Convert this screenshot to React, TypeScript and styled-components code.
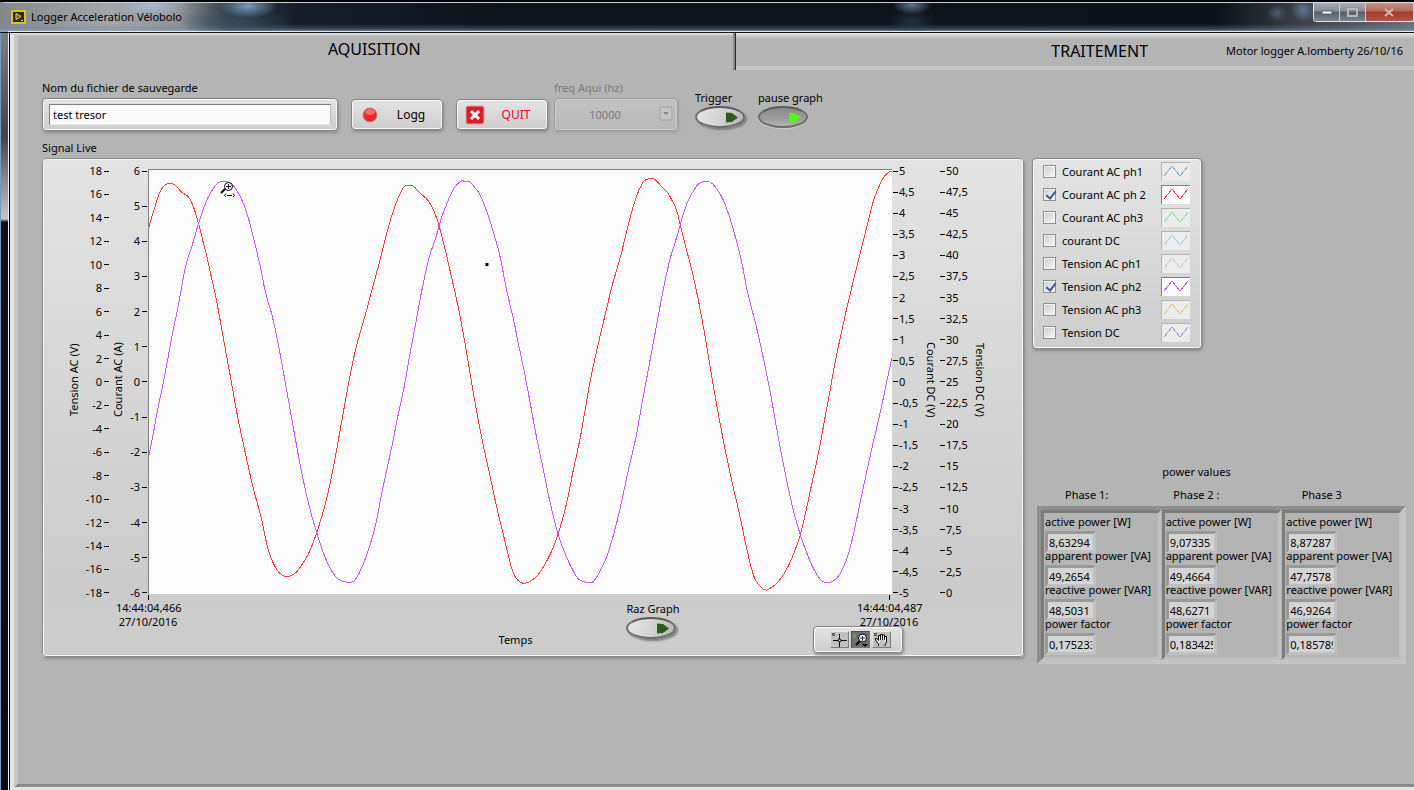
import React, { useState } from 'react';
import styled, { createGlobalStyle, css } from 'styled-components';

const GlobalStyle = createGlobalStyle`
  * { box-sizing: border-box; }
  body {
    margin: 0;
    background: #05080c;
    color: #000;
    font: 11px/16px "Noto Sans", "Open Sans", sans-serif;
  }
  button, input, select { font: inherit; color: inherit; margin: 0; }
`;

/* ---------- window frame ---------- */

const Window = styled.div`
  min-height: 100vh;
  display: flex;
  flex-direction: column;
  padding-left: 10px;
  background:
    linear-gradient(#e8eef2, #e8eef2) 8px 31px / 1px 100% no-repeat,
    linear-gradient(#000, #000) 9px 31px / 1px 100% no-repeat,
    linear-gradient(#6d9cc9, #6d9cc9) 0 0 / 1px 100% no-repeat,
    linear-gradient(#8b9095 0, #6b7177 60px, #3f4449 135px, #8f9295 185px, #c4c6c8 219px, #0b1216 222px, #070c12 100%);
`;

const TitleBar = styled.header`
  height: 33px;
  margin-left: -10px;
  display: flex;
  align-items: flex-start;
  background:
    linear-gradient(#10161d, #10161d) 0 32px / 100% 1px no-repeat,
    linear-gradient(#dfe9f2, #dfe9f2) 8px 31px / 100% 1px no-repeat,
    linear-gradient(#c9d0d6, #c9d0d6) 3px 2px / 100% 1px no-repeat,
    linear-gradient(#020304, #020304) 0 0 / 100% 2px no-repeat,
    radial-gradient(36px 12px at 152px 6px, #a9c3dccc, transparent),
    radial-gradient(30px 12px at 248px 6px, #8fb4d8cc, transparent),
    radial-gradient(60px 14px at 235px 22px, #3e5468aa, transparent),
    radial-gradient(20px 10px at 912px 5px, #6f8dabcc, transparent),
    radial-gradient(24px 12px at 912px 22px, #2c3f53aa, transparent),
    radial-gradient(10px 8px at 1277px 13px, #4c5d70, transparent),
    radial-gradient(12px 12px at 1303px 10px, #5d7492, transparent),
    linear-gradient(transparent 24px, #6c87a466 29px, #8fb0d0aa 31px),
    linear-gradient(90deg, #83888d 0, #a3a7ab 110px, #8d9297 180px, #2b3742 230px, #141d27 300px, #0d141c 500px, #0c131a 1220px, #3a4046 1300px, #6a7076 1414px);
`;

const TitleText = styled.h1`
  flex: 1;
  margin: 8px 0 0 5px;
  font-size: 11px;
  line-height: 18px;
  font-weight: 400;
`;

const AppIcon = styled.svg`
  margin: 10px 0 0 11px;
`;

const WindowButtons = styled.div`
  display: flex;
  height: 20px;
  margin-top: 2px;
  border: 1px solid #dfe4e8;
  border-right: 0;
  border-radius: 0 0 0 4px;
  overflow: hidden;
`;

const WindowButton = styled.button<{ $close?: boolean }>`
  width: ${(p) => (p.$close ? 48 : 26)}px;
  padding: 0;
  display: grid;
  place-items: center;
  border: 0;
  border-right: 1px solid #c9ced2;
  background: ${(p) =>
    p.$close
      ? 'linear-gradient(#c49186, #b4685a 45%, #a03a2a 50%, #b2574a)'
      : 'linear-gradient(#a9adb2, #868c93 45%, #565e67 50%, #7c848c)'};
`;

/* ---------- tabs ---------- */

const TabControl = styled.main`
  flex: 1;
  display: flex;
  flex-direction: column;
  background: #e3e3e3;
  padding: 0 0 3px 4px;
`;

const TabList = styled.div`
  display: grid;
  grid-template-columns: 16fr 15fr;
  height: 37px;
  margin-left: -4px;
`;

const Tab = styled.button<{ $active?: boolean }>`
  display: flex;
  align-items: center;
  padding: 0;
  border: 0;
  font-size: 16px;
  line-height: 20px;
  ${(p) =>
    p.$active
      ? css`
          justify-content: center;
          padding: 0 0 6px 6px;
          background:
            linear-gradient(#e3e3e3, #e3e3e3) 0 0 / 4px 100% no-repeat,
            linear-gradient(#c8c8c8, #c8c8c8) 4px 2px / 4px 100% no-repeat,
            linear-gradient(#dedede 0, #dedede 1px, #c8c8c8 2px, #b4b4b4 3px);
          border-right: 2px solid #8a8a8a;
        `
      : css`
          justify-content: flex-end;
          gap: 78px;
          padding: 0 11px 2px 0;
          border-left: 1px solid #2a2a2a;
          background: linear-gradient(#dedede 0 2px, #c8c8c8 2px 5px, #b4b4b4 5px 33px, #c8c8c8 33px);
        `}
`;

const TabNote = styled.span`
  font-size: 11px;
`;

const Pane = styled.section`
  flex: 1;
  padding: 9px 8px 24px 24px;
  background: #b4b4b4;
  border-left: 4px solid #c8c8c8;
  border-bottom: 3px solid #8a8a8a;
`;

/* ---------- toolbar ---------- */

const Toolbar = styled.div`
  display: flex;
  align-items: flex-end;
  gap: 13px;
`;

const Pair = styled.div`
  display: flex;
  align-items: flex-end;
  gap: 6px;
`;

const Field = styled.div<{ $width: number; $disabled?: boolean }>`
  width: ${(p) => p.$width}px;
  display: flex;
  flex-direction: column;
  gap: 1px;
  line-height: 18px;
  color: ${(p) => (p.$disabled ? '#7b7b7b' : '#000')};
`;

const raised = css`
  border: 1px solid #868686;
  border-radius: 4px;
  background: linear-gradient(#e4e4e4, #cdcdcd);
  box-shadow: inset 0 0 0 1px #f8f8f8, 1px 2px 3px #8c8c8c;
`;

const TextFrame = styled.div`
  ${raised}
  height: 33px;
  padding: 5px 6px;
`;

const TextInput = styled.input`
  display: block;
  width: 100%;
  height: 21px;
  padding: 0 3px;
  border: 1px solid #7f7f7f;
  border-right-color: #bdbdbd;
  border-bottom-color: #e8e8e8;
  background: #fafafa;
`;

const PushButton = styled.button<{ $danger?: boolean }>`
  ${raised}
  display: flex;
  align-items: center;
  width: 92px;
  height: 31px;
  margin-bottom: 1px;
  padding: 0 0 0 8px;
  color: ${(p) => (p.$danger ? '#f5001d' : '#000')};

  span { flex: 1; text-align: center; font-size: 12px; }
`;

const SelectFrame = styled.div`
  position: relative;
  height: 33px;
  border: 1px solid #a0a0a0;
  border-radius: 4px;
  background: linear-gradient(#c3c3c3, #b9b9b9);
  box-shadow: inset 0 0 0 1px #c8c8c8, 1px 2px 3px #a2a2a2;

  svg { position: absolute; right: 4px; top: 7px; pointer-events: none; }
`;

const Select = styled.select`
  appearance: none;
  width: 100%;
  height: 31px;
  padding: 0 22px 0 0;
  border: 0;
  background: transparent;
  text-align: center;
  text-align-last: center;
  &:disabled { color: #7b7b7b; opacity: 1; }
`;

const ToggleBlock = styled.label`
  display: flex;
  flex-direction: column;
  align-items: flex-start;
`;

const ToggleGroup = styled.div`
  display: flex;
  gap: 13px;
  margin: 0 0 3px 4px;
`;

const OvalButton = styled.button<{ $on?: boolean }>`
  width: 50px;
  height: 22px;
  display: flex;
  align-items: center;
  justify-content: flex-end;
  padding: 0 4px;
  border: 2px solid #6e6e6e;
  border-top-color: #5a5a5a;
  border-radius: 50%;
  background: ${(p) =>
    p.$on ? 'linear-gradient(#8a8a8a, #9c9c9c 60%, #b4b4b4)' : 'linear-gradient(110deg, #e8e8e8, #cfcfcf 60%, #b4b4b4)'};
  box-shadow: ${(p) => (p.$on ? '0 1px 1px #cfcfcf' : '2px 2px 2px #808080')};
`;

/* ---------- graph ---------- */

const SectionTitle = styled.h2`
  margin: 8px 0 1px;
  font-size: 11px;
  line-height: 18px;
  font-weight: 400;
`;

const Columns = styled.div`
  display: grid;
  grid-template-columns: minmax(0, 1fr) 374px;
  gap: 8px;
  align-items: start;
`;

const GraphPanel = styled.div`
  border: 2px solid #f4f4f4;
  border-radius: 4px;
  outline: 1px solid #8c8c8c;
  outline-offset: -1px;
  background: linear-gradient(#e3e3e3, #cbcbcb 85%, #cdcdcd);
  box-shadow: 1px 2px 3px #8c8c8c;
`;

const ChartRow = styled.div`
  display: flex;
  height: 438px;
  margin-top: 3px;
  padding: 0 33px 0 21px;
`;

const AxisTitle = styled.div<{ $flip?: boolean }>`
  width: 18px;
  margin-bottom: 4px;
  line-height: 18px;
  text-align: center;
  writing-mode: vertical-rl;
  transform: ${(p) => (p.$flip ? 'rotate(180deg)' : 'none')};
`;

const Scale = styled.ol<{ $side: 'left' | 'right'; $width: number }>`
  width: ${(p) => p.$width}px;
  margin: 0;
  padding: 0;
  list-style: none;
  display: flex;
  flex-direction: column;
  justify-content: space-between;

  li {
    display: flex;
    flex-direction: ${(p) => (p.$side === 'left' ? 'row' : 'row-reverse')};
    justify-content: flex-end;
    align-items: center;
    gap: ${(p) => (p.$side === 'left' ? 2 : 1)}px;
    height: 16px;
    white-space: nowrap;
  }

  li::after {
    content: '';
    width: 5px;
    height: 1px;
    background: #000;
  }
`;

const Plot = styled.div`
  position: relative;
  flex: 1;
  margin: 6px 1px 7px;
  border-top: 1px solid #7f7f7f;
  border-left: 1px solid #7f7f7f;
  background: #fbfbfb;
`;

const Traces = styled.svg`
  display: block;
  width: 100%;
  height: 100%;
`;

const ZoomCursor = styled.svg`
  position: absolute;
  left: 71px;
  top: 11px;
`;

const GraphFooter = styled.div`
  position: relative;
  display: flex;
  justify-content: space-between;
  height: 54px;
  padding: 0 101px 0 72px;
`;

const Stamp = styled.div`
  position: relative;
  width: 64px;
  text-align: center;
  line-height: 14px;
  white-space: nowrap;

  &::before {
    content: '';
    position: absolute;
    left: 32px;
    top: -6px;
    width: 1px;
    height: 5px;
    background: #000;
  }
`;

const FooterMiddle = styled.div`
  flex: 1;
  display: grid;
  grid-template-columns: 1fr auto 1fr;
  column-gap: 94px;
  padding-right: 6px;
`;

const TimeTitle = styled.div`
  align-self: end;
  line-height: 18px;
  margin-bottom: 6px;
`;

const ToolPalette = styled.div`
  ${raised}
  position: absolute;
  right: 119px;
  bottom: 2px;
  display: flex;
  justify-content: center;
  align-items: center;
  gap: 2px;
  width: 90px;
  height: 27px;
  padding-left: 4px;
`;

const ToolButton = styled.button<{ $active?: boolean }>`
  display: block;
  width: 19px;
  height: 17px;
  padding: 0;
  border: 1px solid;
  border-color: ${(p) => (p.$active ? '#4a4a4a #777 #777 #4a4a4a' : '#e6e6e6 #7a7a7a #7a7a7a #e0e0e0')};
  background: ${(p) => (p.$active ? '#6f6f6f' : '#c0c0c0')};
  svg { display: block; }
`;

/* ---------- legend ---------- */

const SideColumn = styled.div`
  display: flex;
  flex-direction: column;
  align-items: flex-start;
`;

const Legend = styled.ul`
  ${raised}
  width: 170px;
  margin: 0;
  padding: 1px 11px 4px 10px;
  list-style: none;
`;

const LegendRow = styled.li`
  display: flex;
  align-items: center;
  height: 23px;

  label { flex: 1; display: flex; align-items: center; gap: 6px; }
`;

const Check = styled.input`
  appearance: none;
  width: 13px;
  height: 13px;
  border: 1px solid #8e8f8f;
  background:
    linear-gradient(135deg, #cbcfd5, #f6f6f6) center / 9px 9px no-repeat,
    #f4f4f4;

  &:checked::before {
    content: '';
    display: block;
    width: 4px;
    height: 8px;
    margin: 0 0 0 4px;
    border: solid #3b54a0;
    border-width: 0 2px 2px 0;
    transform: rotate(38deg);
  }
`;

const Swatch = styled.svg<{ $active?: boolean }>`
  width: 29px;
  height: 19px;
  border-top: 1px solid ${(p) => (p.$active ? '#7f7f7f' : '#b4b4b4')};
  border-left: 1px solid ${(p) => (p.$active ? '#7f7f7f' : '#b4b4b4')};
  background: ${(p) => (p.$active ? '#fcfcfc' : '#ececec')};
`;

/* ---------- power values ---------- */

const PowerSection = styled.section`
  align-self: stretch;
  margin: 114px 0 0 5px;

  h3 {
    margin: 0 0 5px;
    padding-right: 50px;
    font-size: 11px;
    line-height: 18px;
    font-weight: 400;
    text-align: center;
  }
`;

const PhaseNames = styled.div`
  display: grid;
  grid-template-columns: repeat(3, 1fr);
  padding: 0 4px;
  line-height: 18px;
  margin-bottom: 2px;
`;

const PhaseName = styled.span<{ $indent: number }>`
  padding-left: ${(p) => p.$indent}px;
`;

const Cluster = styled.div`
  display: grid;
  grid-template-columns: repeat(3, 1fr);
  gap: 1px;
  border: 4px solid;
  border-color: #8f8f8f #c4c4c4 #c4c4c4 #8f8f8f;
  background: #b4b4b4;
`;

const PhaseCell = styled.div`
  height: 150px;
  padding: 3px 0 0 1px;
  border: 3px solid;
  border-color: #7c7c7c #bfbfbf #bfbfbf #7c7c7c;
`;

const Reading = styled.label`
  display: block;
  height: 34px;
  line-height: 12px;
  white-space: nowrap;
`;

const ReadingValue = styled.input`
  display: block;
  width: 51px;
  height: 22px;
  margin-top: 3px;
  padding: 0 1px;
  border: 3px solid;
  border-color: #999 #c0c0c0 #c0c0c0 #999;
  background: #d4d4d4;
`;

/* ---------- data ---------- */

const currentPh2 =
  '149,227 152,216 155,207 158,196 162,188 166,184 170,183 174,184 178,188 182,193 187,195 190,199 194,208 199,225 203,242 207,257 211,276 215,293 219,314 223,337 228,364 232,386 237,415 245,452 253,489 261,516 266,542 270,557 277,571 283,576 286,577 290,576 296,573 303,563 309,553 317,532 325,505 332,474 340,430 350,373 357,342 366,312 371,292 378,267 384,243 387,231 393,210 399,195 403,187 407,185 412,185 416,189 421,195 425,197 431,205 436,217 439,227 444,246 450,272 457,303 461,323 467,357 474,400 482,442 489,473 495,502 500,523 509,560 512,572 517,581 524,584 531,581 538,575 547,560 553,547 558,533 566,505 572,473 580,437 585,407 590,378 598,342 605,313 612,283 620,257 625,235 629,219 633,205 637,193 642,182 646,179 653,178 657,182 662,188 667,192 671,200 676,209 679,223 685,247 693,277 700,312 705,340 712,383 719,422 725,453 733,490 739,515 745,545 752,575 758,586 765,591 770,588 778,582 788,566 795,548 799,537 805,512 811,483 818,452 823,423 829,392 834,362 840,335 846,307 851,287 858,258 867,222 872,202 876,191 880,182 884,175 888,172 891,171';

const voltagePh2 =
  '149,455 151,445 154,430 157,412 161,394 165,374 169,352 173,330 179,303 183,278 187,260 193,243 197,228 201,216 205,204 210,193 217,183 223,181 230,182 236,189 241,198 247,213 254,240 261,270 264,287 268,303 271,311 277,338 284,376 290,410 298,455 304,485 310,511 317,534 322,551 330,569 336,578 341,581 351,583 356,579 362,567 369,548 376,523 380,500 387,467 392,445 397,418 404,387 409,357 416,320 421,292 429,255 436,237 440,220 447,202 453,188 461,180 465,182 469,181 474,187 479,193 486,210 493,232 500,257 504,280 509,303 514,323 517,340 524,372 531,410 536,438 543,470 548,496 556,530 564,553 571,568 577,579 583,582 590,583 594,581 600,570 606,558 613,535 620,507 628,468 635,440 641,405 647,373 653,341 659,308 665,277 671,252 676,238 680,223 685,205 693,190 699,182 709,181 715,187 722,198 729,217 735,238 742,266 746,290 750,305 757,332 764,365 771,400 776,430 782,462 788,491 794,517 801,540 807,556 812,568 820,581 826,583 832,582 839,575 845,562 851,542 858,508 865,475 872,443 880,410 886,380 891,358';

/* Joins the samples through their midpoints, so the trace has no corners. */
const smooth = (samples: string) => {
  const pts = samples.split(' ').map((s) => s.split(',').map(Number));
  const last = pts[pts.length - 1];
  const bends = pts
    .slice(1, -1)
    .map(([x, y], i) => `Q${x} ${y} ${(x + pts[i + 2][0]) / 2} ${(y + pts[i + 2][1]) / 2}`);
  return `M${pts[0].join(' ')}${bends.join('')}L${last.join(' ')}`;
};

const range = (from: number, step: number, count: number) =>
  Array.from({ length: count }, (_, i) => String(from + step * i).replace('.', ','));

const channels = [
  { name: 'Courant AC ph1', color: '#82aacd', on: false },
  { name: 'Courant AC ph 2', color: '#f53b3b', on: true },
  { name: 'Courant AC ph3', color: '#84e28a', on: false },
  { name: 'courant DC', color: '#9ccfe8', on: false },
  { name: 'Tension AC ph1', color: '#c6c9d4', on: false },
  { name: 'Tension AC ph2', color: '#b84df5', on: true },
  { name: 'Tension AC ph3', color: '#e8c27c', on: false },
  { name: 'Tension DC', color: '#9c98e4', on: false },
];

const quantities = ['active power [W]', 'apparent power [VA]', 'reactive power [VAR]', 'power factor'];

const phases = [
  { name: 'Phase 1:', indent: 24, values: ['8,63294', '49,2654', '48,5031', '0,175233'] },
  { name: 'Phase 2 :', indent: 12, values: ['9,07335', '49,4664', '48,6271', '0,183425'] },
  { name: 'Phase 3', indent: 20, values: ['8,87287', '47,7578', '46,9264', '0,185789'] },
];

/* ---------- parts ---------- */

function Toggle({ id, label, initial = false }: { id: string; label: string; initial?: boolean }) {
  const [on, setOn] = useState(initial);
  return (
    <ToggleBlock htmlFor={id}>
      {label}
      <OvalButton id={id} type="button" $on={on} aria-pressed={on} onClick={() => setOn(!on)}>
        <svg width="14" height="11" viewBox="0 0 14 11" aria-hidden="true">
          <path d="M1 0.5 L7 1 L13 5.5 L7 10 L1 10.5 Z" fill={on ? '#52f51e' : '#2c5a1c'} />
        </svg>
      </OvalButton>
    </ToggleBlock>
  );
}

function AxisScale({ side, width, values }: { side: 'left' | 'right'; width: number; values: string[] }) {
  return (
    <Scale $side={side} $width={width}>
      {values.map((v) => (
        <li key={v}>{v}</li>
      ))}
    </Scale>
  );
}

function Trace({ samples, color }: { samples: string; color: string }) {
  return (
    <path
      d={smooth(samples)}
      fill="none"
      stroke={color}
      vectorEffect="non-scaling-stroke"
      shapeRendering="crispEdges"
    />
  );
}

function Graph() {
  return (
    <GraphPanel>
      <ChartRow>
        <AxisTitle $flip>Tension AC (V)</AxisTitle>
        <AxisScale side="left" width={26} values={range(18, -2, 19)} />
        <AxisTitle $flip>Courant AC (A)</AxisTitle>
        <AxisScale side="left" width={20} values={range(6, -1, 13)} />
        <Plot>
          <Traces viewBox="149 170 742 424" preserveAspectRatio="none" role="img" aria-label="Signal Live">
            <Trace samples={currentPh2} color="#fa3c3c" />
            <Trace samples={voltagePh2} color="#c654ff" />
            <rect x="485" y="263" width="3" height="3" fill="#000" />
          </Traces>
          <ZoomCursor width="16" height="17" viewBox="0 0 16 17" aria-hidden="true">
            <path d="M5 8 L1 12" stroke="#000" strokeWidth="2" />
            <circle cx="8.5" cy="5.5" r="4" fill="#fff" stroke="#000" />
            <path d="M6 5.5H11M8.5 3V8" stroke="#000" />
            <path d="M6 12.5 L4.500 14.500 L6 16 M13 12.500 L14.500 14.500 L13 16 M7 14.500H12" fill="none" stroke="#000" />
          </ZoomCursor>
        </Plot>
        <AxisScale side="right" width={29} values={range(5, -0.5, 21)} />
        <AxisTitle>Courant DC (V)</AxisTitle>
        <AxisScale side="right" width={31} values={range(50, -2.5, 21)} />
        <AxisTitle>Tension DC (V)</AxisTitle>
      </ChartRow>
      <GraphFooter>
        <Stamp>14:44:04,466<br />27/10/2016</Stamp>
        <FooterMiddle>
          <span />
          <TimeTitle>Temps</TimeTitle>
          <Toggle id="raz" label="Raz Graph" />
        </FooterMiddle>
        <Stamp>14:44:04,487<br />27/10/2016</Stamp>
        <ToolPalette>
          <ToolButton aria-label="Cursor">
            <svg width="17" height="15" viewBox="0 0 17 15">
              <rect x="1" y="1" width="3" height="3" fill="#4d7a45" />
              <path d="M2 8.500H7M10 8.500H16M8.500 2V7M8.500 10V15" stroke="#000" />
              <circle cx="8.500" cy="8.500" r="1.500" fill="none" stroke="#000" />
            </svg>
          </ToolButton>
          <ToolButton aria-label="Zoom" $active>
            <svg width="17" height="15" viewBox="0 0 17 15">
              <rect x="1" y="2" width="3" height="4" fill="#5fa04c" />
              <path d="M8 9 L4 13" stroke="#000" strokeWidth="2" />
              <circle cx="10.500" cy="6" r="4" fill="#fff" stroke="#000" />
              <path d="M8 6H13M10.500 4V9" stroke="#20207a" />
              <path d="M10 12H16L13 15Z" fill="#000" />
            </svg>
          </ToolButton>
          <ToolButton aria-label="Pan">
            <svg width="17" height="15" viewBox="0 0 17 15">
              <rect x="1" y="1" width="3" height="3" fill="#4d7a45" />
              <path
                d="M5.500 14V12L2.500 8V6.500H4L5.500 8.500V3.500H7.500V7.500M7.500 7.500V2.500H9.500V7.500M9.500 7.500V3H11.500V7.500M11.500 7.500V4.500H13.500V10L12 12.500V14"
                fill="#f4f4f4"
                stroke="#000"
              />
            </svg>
          </ToolButton>
        </ToolPalette>
      </GraphFooter>
    </GraphPanel>
  );
}

function ChannelLegend() {
  const [shown, setShown] = useState(channels.map((c) => c.on));
  return (
    <Legend>
      {channels.map((c, i) => (
        <LegendRow key={c.name}>
          <label>
            <Check
              type="checkbox"
              checked={shown[i]}
              onChange={() => setShown(shown.map((s, j) => (j === i ? !s : s)))}
            />
            {c.name}
          </label>
          <Swatch $active={shown[i]} viewBox="0 0 28 18" aria-hidden="true">
            <path d="M2 13 L10 3 L18 13 L26 3" fill="none" stroke={c.color} shapeRendering="crispEdges" />
          </Swatch>
        </LegendRow>
      ))}
    </Legend>
  );
}

function PowerValues() {
  return (
    <PowerSection>
      <h3>power values</h3>
      <PhaseNames>
        {phases.map((p) => (
          <PhaseName key={p.name} $indent={p.indent}>{p.name}</PhaseName>
        ))}
      </PhaseNames>
      <Cluster>
        {phases.map((p) => (
          <PhaseCell key={p.name}>
            {quantities.map((q, i) => (
              <Reading key={q}>
                {q}
                <ReadingValue readOnly value={p.values[i]} />
              </Reading>
            ))}
          </PhaseCell>
        ))}
      </Cluster>
    </PowerSection>
  );
}

export default function App() {
  return (
    <>
      <GlobalStyle />
      <Window>
        <TitleBar>
          <AppIcon width="15" height="14" viewBox="0 0 15 14" aria-hidden="true">
            <rect x="1" y="1" width="13" height="12" fill="#2a2a1c" stroke="#e0c21c" strokeWidth="2" />
            <path d="M5 3.500L10 6.500L5 9.500Z" fill="#6a5a10" stroke="#f2dc3a" />
            <path d="M10 10.500H12" stroke="#e8e0b0" />
          </AppIcon>
          <TitleText>Logger Acceleration Vélobolo</TitleText>
          <WindowButtons>
            <WindowButton aria-label="Minimize">
              <svg width="12" height="5"><rect x="1" y="1" width="10" height="3" fill="#fff" stroke="#5a6066" /></svg>
            </WindowButton>
            <WindowButton aria-label="Maximize">
              <svg width="11" height="9"><rect x="1" y="1" width="9" height="7" fill="none" stroke="#b4b8bc" strokeWidth="2" /></svg>
            </WindowButton>
            <WindowButton aria-label="Close" $close>
              <svg width="11" height="9"><path d="M1 1L9 8M9 1L1 8" stroke="#d0b8b4" strokeWidth="2" /></svg>
            </WindowButton>
          </WindowButtons>
        </TitleBar>
        <TabControl>
          <TabList role="tablist">
            <Tab role="tab" aria-selected="true" $active>AQUISITION</Tab>
            <Tab role="tab" aria-selected="false">
              TRAITEMENT
              <TabNote>Motor logger A.lomberty 26/10/16</TabNote>
            </Tab>
          </TabList>
          <Pane>
            <Toolbar>
              <Field $width={296}>
                <label htmlFor="file">Nom du fichier de sauvegarde</label>
                <TextFrame>
                  <TextInput id="file" defaultValue="test tresor" />
                </TextFrame>
              </Field>
              <PushButton type="button">
                <svg width="20" height="18" viewBox="0 0 20 18" aria-hidden="true">
                  <circle cx="10" cy="9" r="7" fill="#e8282c" stroke="#c98080" />
                  <ellipse cx="10" cy="6" rx="5" ry="3" fill="#f26a6a" />
                </svg>
                <span>Logg</span>
              </PushButton>
              <Pair>
                <PushButton type="button" $danger>
                  <svg width="20" height="20" viewBox="0 0 20 20" aria-hidden="true">
                    <rect x="1" y="1" width="18" height="18" rx="2" fill="#d81e2a" stroke="#e6a0a0" />
                    <path d="M6 6L14 14M14 6L6 14" stroke="#fff" strokeWidth="3" />
                  </svg>
                  <span>QUIT</span>
                </PushButton>
                <Field $width={124} $disabled>
                  <label htmlFor="freq">freq Aqui (hz)</label>
                  <SelectFrame>
                    <Select id="freq" disabled defaultValue="10000">
                      <option>10000</option>
                    </Select>
                    <svg width="14" height="15" viewBox="0 0 14 15" aria-hidden="true">
                      <rect x="1" y="1" width="12" height="13" rx="1" fill="#c6c6c6" stroke="#a0a0a0" />
                      <path d="M4 6H10L7 9Z" fill="#858585" />
                    </svg>
                  </SelectFrame>
                </Field>
              </Pair>
              <ToggleGroup>
                <Toggle id="trigger" label="Trigger" />
                <Toggle id="pause" label="pause graph" initial />
              </ToggleGroup>
            </Toolbar>
            <SectionTitle>Signal Live</SectionTitle>
            <Columns>
              <Graph />
              <SideColumn>
                <ChannelLegend />
                <PowerValues />
              </SideColumn>
            </Columns>
          </Pane>
        </TabControl>
      </Window>
    </>
  );
}
